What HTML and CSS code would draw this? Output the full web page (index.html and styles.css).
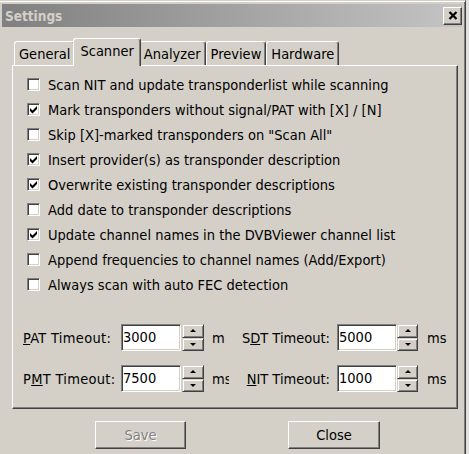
FILE: index.html
```html
<!DOCTYPE html>
<html>
<head>
<meta charset="utf-8">
<title>Settings</title>
<link rel="stylesheet" href="styles.css">
</head>
<body>
<div class="dialog">
  <div class="titlebar">
    <span class="title">Settings</span>
    <button class="close-btn" aria-label="Close">
      <svg width="10" height="9" viewBox="0 0 10 9"><path d="M1.5 1 L8.5 8 M8.5 1 L1.5 8" stroke="#000" stroke-width="2.2" fill="none"/></svg>
    </button>
  </div>
  <div class="tabs">
    <div class="tab">General</div>
    <div class="tab active">Scanner</div>
    <div class="tab">Analyzer</div>
    <div class="tab">Preview</div>
    <div class="tab">Hardware</div>
  </div>
  <div class="panel">
    <div class="checks">
      <div class="check"><span class="box"></span><span>Scan NIT and update transponderlist while scanning</span></div>
      <div class="check"><span class="box"><svg class="mark" viewBox="0 0 9 9"><polygon points="1,3 3.5,5.5 8,1 8,4 3.5,8.5 1,6"/></svg></span><span>Mark transponders without signal/PAT with [X] / [N]</span></div>
      <div class="check"><span class="box"></span><span>Skip [X]-marked transponders on "Scan All"</span></div>
      <div class="check"><span class="box"><svg class="mark" viewBox="0 0 9 9"><polygon points="1,3 3.5,5.5 8,1 8,4 3.5,8.5 1,6"/></svg></span><span>Insert provider(s) as transponder description</span></div>
      <div class="check"><span class="box"><svg class="mark" viewBox="0 0 9 9"><polygon points="1,3 3.5,5.5 8,1 8,4 3.5,8.5 1,6"/></svg></span><span>Overwrite existing transponder descriptions</span></div>
      <div class="check"><span class="box"></span><span>Add date to transponder descriptions</span></div>
      <div class="check"><span class="box"><svg class="mark" viewBox="0 0 9 9"><polygon points="1,3 3.5,5.5 8,1 8,4 3.5,8.5 1,6"/></svg></span><span>Update channel names in the DVBViewer channel list</span></div>
      <div class="check"><span class="box"></span><span>Append frequencies to channel names (Add/Export)</span></div>
      <div class="check"><span class="box"></span><span>Always scan with auto FEC detection</span></div>
    </div>
    <div class="fields">
      <div class="frow">
        <span class="flabel"><u>P</u>AT Timeout:</span>
        <span class="input">3000</span>
        <span class="spin"><span class="spin-btn up"></span><span class="spin-btn down"></span></span>
        <span class="unit"><span class="clip narrow">ms</span></span>
        <span class="flabel right">S<u>D</u>T Timeout:</span>
        <span class="input second">5000</span>
        <span class="spin second"><span class="spin-btn up"></span><span class="spin-btn down"></span></span>
        <span class="unit second">ms</span>
      </div>
      <div class="frow">
        <span class="flabel">P<u>M</u>T Timeout:</span>
        <span class="input">7500</span>
        <span class="spin"><span class="spin-btn up"></span><span class="spin-btn down"></span></span>
        <span class="unit"><span class="clip wide">ms</span></span>
        <span class="flabel right"><u>N</u>IT Timeout:</span>
        <span class="input second">1000</span>
        <span class="spin second"><span class="spin-btn up"></span><span class="spin-btn down"></span></span>
        <span class="unit second">ms</span>
      </div>
    </div>
  </div>
  <div class="buttons">
    <button class="btn disabled">Save</button>
    <button class="btn close">Close</button>
  </div>
</div>
</body>
</html>
```
FILE: styles.css
```css
* { box-sizing: border-box; }
html, body { margin: 0; }
body {
  width: 469px;
  height: 454px;
  overflow: hidden;
  background: #e2e1dd;
  font-family: "DejaVu Sans Condensed", "DejaVu Sans", sans-serif;
  font-stretch: condensed;
  font-size: 14.5px;
  color: #000;
}
.dialog {
  margin-left: -2px;
  width: 468px;
  height: 470px;
  background: #d4d0c8;
  border: 1px solid;
  border-color: #d4d0c8 #404040 #404040 #d4d0c8;
  box-shadow: inset 1px 1px #fff, inset -1px -1px #808080;
  padding: 3px;
}
.titlebar {
  height: 23px;
  display: flex;
  align-items: center;
  justify-content: space-between;
  padding-left: 3px;
  background: linear-gradient(to right, #808080, #c4c4c4);
}
.title {
  font-weight: bold;
  font-size: 13.5px;
  color: #d4d0c8;
}
.close-btn {
  width: 19px;
  height: 18px;
  padding: 0;
  background: #d4d0c8;
  border: 1px solid;
  border-color: #fff #404040 #404040 #fff;
  box-shadow: inset -1px -1px #808080;
  display: flex;
  align-items: center;
  justify-content: center;
}
.tabs {
  display: flex;
  align-items: flex-end;
  height: 27px;
  margin: 11px 0 0 12px;
}
.tab {
  height: 24px;
  padding: 0 4px;
  display: flex;
  align-items: center;
  border: 1px solid #fff;
  border-bottom: none;
  border-right-color: #404040;
  box-shadow: inset -1px 0 #808080;
  border-radius: 3px 3px 0 0;
  background: #d4d0c8;
}
.tab.active {
  height: 28px;
  margin: 0 -2px -1px;
  padding: 0 6px 3px;
  position: relative;
  z-index: 1;
}
.panel {
  margin: 0 4px 0 10px;
  height: 344px;
  border: 1px solid;
  border-color: #fff #404040 #404040 #fff;
  box-shadow: inset -1px -1px #808080;
  padding-top: 6px;
}
.checks { padding-left: 14px; }
.check {
  display: flex;
  align-items: center;
  gap: 8px;
  height: 25px;
  white-space: nowrap;
}
.box {
  flex: none;
  width: 13px;
  height: 13px;
  background: #fff;
  border: 1px solid;
  border-color: #808080 #fff #fff #808080;
  box-shadow: inset 1px 1px #404040, inset -1px -1px #d4d0c8;
  padding: 1px;
  display: flex;
}
.mark { width: 9px; height: 9px; fill: #000; }
.fields {
  margin-top: 27px;
  padding-left: 9px;
  display: flex;
  flex-direction: column;
  gap: 14px;
}
.frow {
  display: flex;
  height: 27px;
  line-height: 17px;
  white-space: nowrap;
}
.flabel { width: 99px; padding: 6px 0 0 1px; letter-spacing: 0.3px; }
.flabel.right { width: 101px; padding-left: 0; text-align: right; letter-spacing: 0; }
.input {
  width: 60px;
  height: 27px;
  background: #fff;
  border: 1px solid;
  border-color: #808080 #fff #fff #808080;
  box-shadow: inset 1px 1px #404040, inset -1px -1px #d4d0c8;
  padding: 4px 0 0 1px;
}
.input.second { margin-left: 7px; }
.spin {
  width: 22px;
  height: 27px;
  margin-left: 1px;
  display: flex;
  flex-direction: column;
}
.spin.second { width: 21px; margin-left: 0; }
.spin-btn {
  flex: 1;
  background: #d4d0c8;
  border: 1px solid;
  border-color: #d4d0c8 #404040 #404040 #d4d0c8;
  box-shadow: inset 1px 1px #fff, inset -1px -1px #808080;
  display: flex;
  align-items: center;
  justify-content: center;
}
.spin-btn::after {
  content: "";
  border-left: 3px solid transparent;
  border-right: 3px solid transparent;
}
.spin-btn.up::after { border-bottom: 3px solid #000; }
.spin-btn.down::after { border-top: 3px solid #000; }
.unit { width: 25px; padding: 6px 0 0 8px; }
.unit.second { width: auto; padding-left: 9px; }
.clip { display: inline-block; overflow: hidden; vertical-align: top; }
.clip.narrow { width: 13px; }
.clip.wide { width: 17px; }
.buttons {
  display: flex;
  gap: 102px;
  margin: 12px 0 0 93px;
}
.btn {
  width: 91px;
  height: 28px;
  padding: 0;
  font: inherit;
  color: #000;
  background: #d4d0c8;
  border: 1px solid;
  border-color: #fff #404040 #404040 #fff;
  box-shadow: inset -1px -1px #808080;
}
.btn.close { width: 92px; }
.btn.disabled { color: #808080; text-shadow: 1px 1px #fff; }
```
